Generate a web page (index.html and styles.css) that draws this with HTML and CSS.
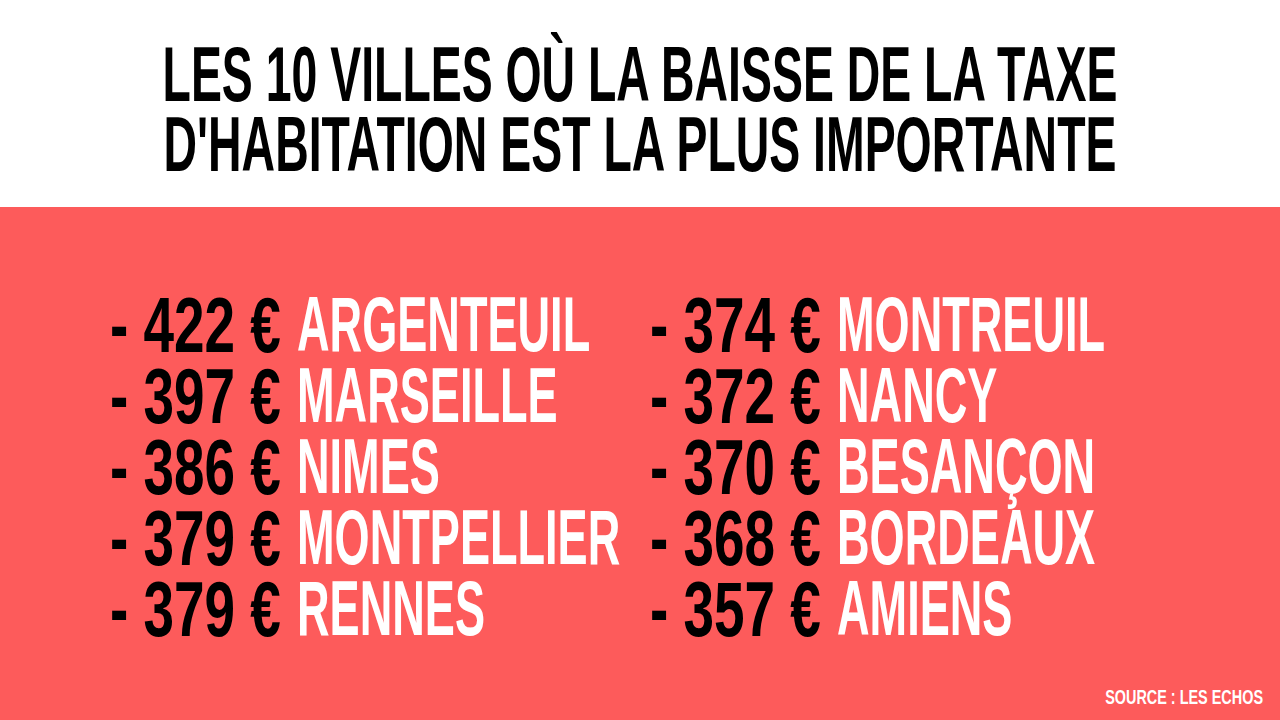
FILE: index.html
```html
<!DOCTYPE html>
<html lang="fr">
<head>
<meta charset="utf-8">
<title>Taxe d'habitation</title>
<link rel="stylesheet" href="styles.css">
</head>
<body>
<div class="page">
  <header class="header">
    <div class="title-line"><span class="fit title-fit">LES 10 VILLES OÙ LA BAISSE DE LA TAXE</span></div>
    <div class="title-line"><span class="fit title-fit">D'HABITATION EST LA PLUS IMPORTANTE</span></div>
  </header>
  <main class="panel">
    <div class="lists">
      <ul class="col">
        <li class="row"><span class="amt"><span class="fit amt-fit">- 422 €</span></span><span class="city"><span class="fit city-fit">ARGENTEUIL</span></span></li>
        <li class="row"><span class="amt"><span class="fit amt-fit">- 397 €</span></span><span class="city"><span class="fit city-fit">MARSEILLE</span></span></li>
        <li class="row"><span class="amt"><span class="fit amt-fit">- 386 €</span></span><span class="city"><span class="fit city-fit">NIMES</span></span></li>
        <li class="row"><span class="amt"><span class="fit amt-fit">- 379 €</span></span><span class="city"><span class="fit city-fit">MONTPELLIER</span></span></li>
        <li class="row"><span class="amt"><span class="fit amt-fit">- 379 €</span></span><span class="city"><span class="fit city-fit">RENNES</span></span></li>
      </ul>
      <ul class="col">
        <li class="row"><span class="amt"><span class="fit amt-fit">- 374 €</span></span><span class="city"><span class="fit city-fit">MONTREUIL</span></span></li>
        <li class="row"><span class="amt"><span class="fit amt-fit">- 372 €</span></span><span class="city"><span class="fit city-fit">NANCY</span></span></li>
        <li class="row"><span class="amt"><span class="fit amt-fit">- 370 €</span></span><span class="city"><span class="fit city-fit">BESANÇON</span></span></li>
        <li class="row"><span class="amt"><span class="fit amt-fit">- 368 €</span></span><span class="city"><span class="fit city-fit">BORDEAUX</span></span></li>
        <li class="row"><span class="amt"><span class="fit amt-fit">- 357 €</span></span><span class="city"><span class="fit city-fit">AMIENS</span></span></li>
      </ul>
    </div>
    <footer class="source"><span class="fit source-fit">SOURCE : LES ECHOS</span></footer>
  </main>
</div>
</body>
</html>
```
FILE: styles.css
```css
* { box-sizing: border-box; }
html, body { margin: 0; padding: 0; }
body {
  width: 1280px;
  height: 720px;
  overflow: hidden;
  font-family: "Liberation Sans", Arial, sans-serif;
  font-weight: 700;
  background: #ffffff;
}
.page {
  width: 1280px;
  height: 720px;
  display: flex;
  flex-direction: column;
}
/* Condensed look: natural widths, glyphs stretched vertically */
.fit {
  display: block;
  white-space: nowrap;
  transform-origin: left top;
}
.header {
  height: 207px;
  background: #ffffff;
  padding-top: 40px;
  display: flex;
  flex-direction: column;
  align-items: center;
}
.title-line {
  display: flex;
  align-items: flex-start;
  height: 70px;
  color: #000000;
}
.title-fit {
  font-size: 46.41px;
  line-height: 41.65px;
  transform: scaleY(1.6807);
}

.panel {
  flex: 1;
  background: #fd5b5b;
  display: flex;
  flex-direction: column;
  padding-top: 83px;
}
.lists {
  display: flex;
  padding-left: 110px;
}
.col {
  list-style: none;
  margin: 0;
  padding: 0;
  width: 540px;
}
.row {
  display: flex;
  align-items: flex-start;
  height: 71px;
}
.amt {
  width: 187px;
  flex: none;
  color: #000000;
}
.amt-fit {
  font-size: 54.9px;
  line-height: 50.62px;
  transform: scaleY(1.4025);
}
.city {
  flex: 1;
  min-width: 0;
  color: #ffffff;
}
.city-fit {
  font-size: 45.12px;
  line-height: 41.61px;
  transform: scaleY(1.7065);
}

.source {
  margin-top: auto;
  padding: 0 17px 12px 0;
  height: 33px;
  display: flex;
  justify-content: flex-end;
  align-items: flex-start;
  color: #ffffff;
}
.source-fit {
  font-size: 14.43px;
  line-height: 14.43px;
  transform: scaleY(1.4556);
}
```
